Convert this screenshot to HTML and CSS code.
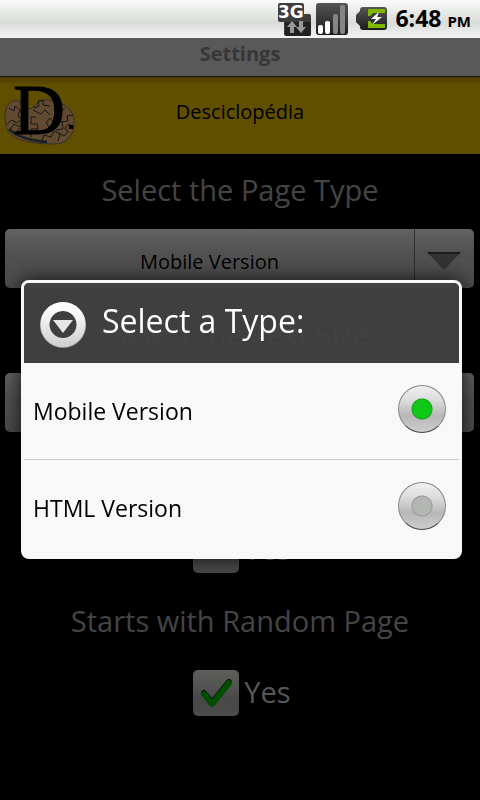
FILE: index.html
```html
<!DOCTYPE html>
<html lang="en">
<head>
    <meta charset="UTF-8">
    <meta name="viewport" content="width=device-width, initial-scale=1.0">
    <title>Settings</title>
    <link rel="stylesheet" href="styles.css">
</head>
<body>
    <div class="status-bar">
        <svg class="status-icon" width="34" height="34" viewBox="0 0 34 34" aria-label="3G">
            <path d="M3 1h22q2 0 2 2v9h5q2 0 2 2v18q0 2-2 2H9q-2 0-2-2V20H3q-2 0-2-2V3q0-2 2-2z" fill="#3c3c3c"/>
            <path d="M8 20h26v12q0 2-2 2H10q-2 0-2-2z" fill="#222"/>
            <text class="net-label" x="1" y="16">3G</text>
            <path d="M15 19l5 6h-3v6h-4v-6h-3z" fill="#999"/>
            <path d="M24 31l5-6h-3v-6h-4v6h-3z" fill="#999"/>
        </svg>
        <svg class="status-icon" width="32" height="34" viewBox="0 0 32 34" aria-label="Signal">
            <defs>
                <linearGradient id="dark" x1="0" y1="0" x2="0" y2="1">
                    <stop offset="0" stop-color="#555"/>
                    <stop offset="1" stop-color="#1c1c1c"/>
                </linearGradient>
            </defs>
            <rect x="0" y="1" width="32" height="32" rx="3" fill="url(#dark)"/>
            <rect x="2" y="23" width="5" height="9" rx="2" fill="#fff"/>
            <rect x="9" y="19" width="5" height="13" rx="2" fill="#fff"/>
            <rect x="17" y="12" width="5" height="20" rx="2" fill="#858585"/>
            <rect x="24" y="3" width="5" height="29" rx="2" fill="#858585"/>
        </svg>
        <svg class="status-icon battery" width="33" height="34" viewBox="0 0 33 34" aria-label="Charging">
            <path d="M8 5h21q3 0 3 3v17q0 3-3 3H8q-3 0-3-3v-1L1 20v-7l4-4V8q0-3 3-3z" fill="url(#dark)"/>
            <path d="M13 7h17v4H18l-3 3h-2zM13 26h17v-4H18l-3-3h-2z" fill="#80b800"/>
            <path d="M24 10l-8 7h5l-4 6 10-8h-5z" fill="#fff"/>
        </svg>
        <span class="clock">6:48 <small>PM</small></span>
    </div>

    <main class="page">
        <h1 class="title-bar">Settings</h1>
        <header class="brand-bar">
            <svg class="logo" width="75" height="72" viewBox="0 0 75 72" aria-hidden="true">
                <g transform="translate(0 2)">
                    <path d="M4 29C6 18 14 14 19 18c3 8 10 8 14 5 6-8 12-8 20-6 12 2 20 11 20 20 1 14-7 23-20 23C31 60 12 56 7 47 4 41 4 35 4 29z" fill="#f4b878" stroke="#70757c"/>
                    <path d="M8 24l5 3 1-5 5 4-2 6 4 3-5 4-5-3-5 4M9 46l4-6 6 3 2-5 6 3M15 50l3-6M33 24l5-2-1-5 5-1v5l7 1M35 33h-5v7h6l1 5h-7v8M32 26l8 4 4-4 5 5M40 58l3-7 7 2 3-6 6 3-2 7M55 23l4 5 5-4M72 31l-6 1 1 5-7 1-2-6-5 1M73 43l-5-3-4 4 3 4-4 4-5-3M49 44l4-5-4-5-4 5zM61 38l1 7-7 1" fill="none" stroke="#30343c"/>
                    <path d="M8 45q12 11 38 13" fill="none" stroke="#4b5055" stroke-width="3"/>
                    <path d="M68 41h4v4h-4z" fill="#000"/>
                </g>
                <text class="logo-letter" x="12" y="52">D</text>
            </svg>
            <span class="brand-name">Desciclopédia</span>
        </header>

        <form class="settings">
            <section class="setting">
                <label class="setting-label" for="page-type">Select the Page Type</label>
                <div class="spinner">
                    <select id="page-type">
                        <option>Mobile Version</option>
                        <option>HTML Version</option>
                    </select>
                    <svg class="spinner-arrow" width="34" height="18" viewBox="0 0 34 18" aria-hidden="true">
                        <path d="M0 0h34L17 18z" fill="#7c807c"/>
                        <path d="M0 0h34l-2 2H2z" fill="#444"/>
                    </svg>
                </div>
            </section>
            <section class="setting">
                <label class="setting-label" for="text-size">Select the Text Size</label>
                <div class="spinner">
                    <select id="text-size"></select>
                </div>
            </section>
            <section class="setting setting-end">
                <label class="check">
                    <input type="checkbox">
                    Yes
                </label>
            </section>
            <section class="setting">
                <div class="setting-label">Starts with Random Page</div>
                <label class="check">
                    <input type="checkbox" checked>
                    <svg class="check-mark" width="34" height="30" viewBox="0 0 34 30" aria-hidden="true">
                        <path d="M4 14l8 10L29 3" fill="none" stroke="#111" stroke-width="6" stroke-linecap="round" stroke-linejoin="round"/>
                        <path d="M4 15l8 10L29 4" fill="none" stroke="#00c000" stroke-width="6" stroke-linecap="round" stroke-linejoin="round"/>
                    </svg>
                    Yes
                </label>
            </section>
        </form>
    </main>

    <div class="backdrop">
        <div class="dialog" role="dialog" aria-labelledby="dialog-title">
            <div class="dialog-header">
                <svg class="dialog-icon" width="46" height="46" viewBox="0 0 46 46" aria-hidden="true">
                    <defs>
                        <linearGradient id="ring" x1="0" y1="0" x2="0" y2="1">
                            <stop offset="0" stop-color="#fff"/>
                            <stop offset="1" stop-color="#d2d4d2"/>
                        </linearGradient>
                    </defs>
                    <circle cx="23" cy="23" r="18.5" fill="none" stroke="#999" stroke-width="9"/>
                    <circle cx="23" cy="22.5" r="18" fill="none" stroke="url(#ring)" stroke-width="9"/>
                    <path d="M13 18h20L23 31z" fill="#e4e5e4"/>
                </svg>
                <h2 id="dialog-title">Select a Type:</h2>
            </div>
            <label class="option">
                <span>Mobile Version</span>
                <input type="radio" name="type" checked>
            </label>
            <label class="option">
                <span>HTML Version</span>
                <input type="radio" name="type">
            </label>
        </div>
    </div>
</body>
</html>
```
FILE: styles.css
```css
* {
    box-sizing: border-box;
}

body {
    margin: 0;
    min-height: 100vh;
    background-color: #000;
    font-family: "Open Sans", "Noto Sans", sans-serif;
    color: #000;
}

/* Status bar */
.status-bar {
    display: flex;
    justify-content: flex-end;
    align-items: center;
    gap: 5px;
    height: 38px;
    padding-right: 9px;
    background: linear-gradient(#fafafa, #e9ebe9 30%, #d9dcd9 60%, #f4f4f4);
}

.battery {
    margin: 0 2px;
}

.net-label {
    font: bold 17px "DejaVu Sans", sans-serif;
    fill: #fff;
}

.clock {
    font-size: 23px;
    line-height: 38px;
    font-weight: bold;
}

.clock small {
    font-size: 15px;
}

/* Page behind the dialog */
.title-bar {
    margin: 0;
    height: 39px;
    border-bottom: 1px solid #333;
    background-color: #dedede;
    color: #888a8a;
    font-size: 20px;
    line-height: 32px;
    text-align: center;
}

.brand-bar {
    display: grid;
    grid-template-columns: 80px 1fr 80px;
    height: 77px;
    padding-top: 5px;
    background: linear-gradient(#b89400, #f2c600 8px);
}

.logo {
    margin-left: 1px;
    overflow: visible;
}

.logo-letter {
    font: 72px "Liberation Serif", serif;
    stroke: #000;
}

.brand-name {
    font-size: 20px;
    line-height: 60px;
    text-align: center;
}

.setting {
    display: flex;
    flex-direction: column;
    align-items: center;
    min-height: 143px;
}

.setting-end {
    justify-content: flex-end;
}

.setting-label {
    height: 72px;
    color: #aaa;
    font-size: 29px;
    line-height: 72px;
}

.spinner {
    position: relative;
    align-self: stretch;
    margin: 3px 6px 10px 5px;
}

.spinner select {
    display: block;
    appearance: none;
    width: 100%;
    height: 59px;
    padding: 6px 60px 0 0;
    border: 0;
    border-radius: 5px;
    background: linear-gradient(to right, #777, #777) calc(100% - 59px) 0 / 1px 100% no-repeat,
        linear-gradient(#f4f8f4, #dcdcdc 20%, #d4d8d2 32%, #cacaca 40%, #bababa);
    font-family: inherit;
    font-size: 20px;
    color: #000;
    text-align: center;
    text-align-last: center;
}

.spinner-arrow {
    position: absolute;
    top: 23px;
    right: 13px;
    pointer-events: none;
}

.check {
    position: relative;
    display: flex;
    align-items: flex-start;
    gap: 5px;
    height: 71px;
    padding: 13px 0 0 4px;
    color: #d8d8d8;
    font-size: 29px;
    line-height: 44px;
}

.check input {
    appearance: none;
    width: 46px;
    height: 46px;
    margin: 0;
    border-radius: 5px;
    background: linear-gradient(#e8ece8, #d4d8d2 30%, #c4c4c4 50%, #b2b2b2 60%, #bcbcbc);
}

.check-mark {
    position: absolute;
    top: 22px;
    left: 11px;
}

/* Dialog */
.backdrop {
    position: fixed;
    inset: 38px 0 0;
    display: flex;
    align-items: center;
    padding: 0 18px 0 21px;
    background-color: rgba(0, 0, 0, 0.6);
}

.dialog {
    width: 100%;
    border: 3px solid #f8f8f8;
    border-radius: 8px;
    box-shadow: 0 0 20px rgba(0, 0, 0, 0.8);
}

.dialog-header {
    display: flex;
    align-items: center;
    gap: 16px;
    height: 80px;
    padding: 4px 16px 0;
    border-radius: 5px 5px 0 0;
    background-color: rgba(66, 66, 66, 0.96);
}

.dialog-header h2 {
    margin: 0;
    color: #fff;
    font-size: 32px;
    font-weight: normal;
    line-height: 44px;
    padding-bottom: 8px;
}

.option {
    display: flex;
    justify-content: space-between;
    align-items: center;
    height: 96px;
    padding: 0 13px 4px 9px;
    background-color: #f8f8f8;
    font-size: 23px;
}

.option + .option {
    height: 97px;
    border-top: 1px solid #ccc;
}

.option span {
    padding-top: 4px;
}

.option input {
    appearance: none;
    width: 48px;
    height: 48px;
    margin: 0;
    border: 1px solid #888;
    border-bottom-color: #444;
    border-radius: 50%;
    background: radial-gradient(circle, #b4b6b4 9px, #999 10px, transparent 11px),
        linear-gradient(#f0f0f0, #ddd 30%, #b8b8b8 65%, #ccc);
}

.option input:checked {
    background: radial-gradient(circle, #10c818 9px, #14a018 10px, transparent 11px),
        linear-gradient(#f0f0f0, #ddd 30%, #b8b8b8 65%, #ccc);
}
```
